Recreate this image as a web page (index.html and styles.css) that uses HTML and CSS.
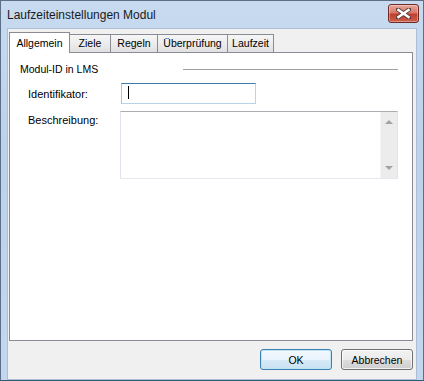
FILE: index.html
```html
<!DOCTYPE html>
<html lang="de">
<head>
  <meta charset="UTF-8">
  <title>Laufzeiteinstellungen Modul</title>
  <link rel="stylesheet" href="styles.css">
</head>
<body>

<div class="window">
  <div class="titlebar">
    <span class="title">Laufzeiteinstellungen Modul</span>
    <button class="close" title="Schließen">
      <svg width="15" height="11" viewBox="0 0 15 11">
        <path d="M2 1.5 L13 9.5 M13 1.5 L2 9.5" stroke="#5a3a36" stroke-width="4.2" stroke-linecap="square"/>
        <path d="M2.5 2 L12.5 9 M12.5 2 L2.5 9" stroke="#fff" stroke-width="2.6" stroke-linecap="square"/>
      </svg>
    </button>
  </div>

  <div class="client">
    <div class="tabs">
      <div class="tab active tab-allgemein">Allgemein</div>
      <div class="tab tab-ziele">Ziele</div>
      <div class="tab tab-regeln">Regeln</div>
      <div class="tab tab-pruefung">Überprüfung</div>
      <div class="tab tab-laufzeit">Laufzeit</div>
    </div>

    <div class="panel">
      <div class="group-header">
        <span>Modul-ID in LMS</span>
        <div class="group-line"></div>
      </div>

      <div class="row">
        <label class="field-label">Identifikator:</label>
        <div class="textbox"><span class="caret"></span></div>
      </div>

      <div class="row row-top">
        <label class="field-label">Beschreibung:</label>
        <div class="textarea">
          <div class="textarea-body"></div>
          <div class="scrollbar">
            <span class="arrow-up"></span>
            <span class="arrow-down"></span>
          </div>
        </div>
      </div>
    </div>

    <div class="actions">
      <button class="btn btn-default">OK</button>
      <button class="btn">Abbrechen</button>
    </div>
  </div>
</div>

</body>
</html>
```

FILE: styles.css
```css
body {
  margin: 0;
  font-family: 'Liberation Sans', Arial, sans-serif;
  color: #000;
}

.window {
  width: 424px;
  height: 381px;
  box-sizing: border-box;
  border: 1px solid #5d6f86;
  border-bottom-color: #2b5e73;
  background: linear-gradient(180deg, #c7daf0 0%, #bcd2eb 40%, #c3d7ee 100%);
}

.titlebar {
  height: 27px;
  display: flex;
  align-items: center;
  justify-content: space-between;
  padding-left: 6px;
}

.title {
  font-size: 12px;
  color: #1a1a1a;
}

.close {
  width: 31px;
  height: 19px;
  margin: -3px 4px 0 0;
  padding: 0;
  border: 1px solid #6d2a22;
  border-radius: 3px;
  background: linear-gradient(180deg, #e7a79c 0%, #d6796b 45%, #c0402e 55%, #cc5d4c 100%);
  display: flex;
  align-items: center;
  justify-content: center;
  box-shadow: inset 0 0 0 1px rgba(255, 255, 255, 0.35);
}

.client {
  margin: 0 6px 3px 6px;
  height: 347px;
  border: 1px solid #aebfd5;
  background: #f0f0f0;
  padding: 3px 3px 0 1px;
}

/* tabs */

.tabs {
  display: flex;
  align-items: flex-end;
  position: relative;
  z-index: 2;
}

.tab {
  box-sizing: border-box;
  height: 18px;
  margin-left: -1px;
  border: 1px solid #898c95;
  border-bottom: none;
  background: linear-gradient(180deg, #f6f6f6 0%, #ececec 50%, #e0e0e0 100%);
  font-size: 10.5px;
  line-height: 16px;
  text-align: center;
}

.tab.active {
  height: 21px;
  margin-bottom: -1px;
  background: #fff;
  line-height: 20px;
  z-index: 3;
}

.tab-allgemein { width: 61px; margin-left: 0; }
.tab-ziele { width: 42px; }
.tab-regeln { width: 48px; }
.tab-pruefung { width: 71px; }
.tab-laufzeit { width: 47px; }

.panel {
  box-sizing: border-box;
  width: 404px;
  height: 289px;
  border: 1px solid #898c95;
  background: #fff;
  padding: 10px 14px 0 10px;
}

.group-header {
  display: flex;
  align-items: center;
  height: 12px;
  font-size: 10.5px;
}

.group-line {
  margin-left: auto;
  width: 215px;
  border-top: 1px solid #a0a0a0;
}

.row {
  display: flex;
  align-items: center;
  margin: 8px 0 0 8px;
}

.row-top {
  align-items: flex-start;
  margin-top: 7px;
}

.field-label {
  width: 92px;
  font-size: 11px;
}

.row-top .field-label {
  padding-top: 3px;
}

.textbox {
  box-sizing: border-box;
  width: 135px;
  height: 21px;
  margin-left: 1px;
  border: 1px solid #b7d3ea;
  border-top-color: #3d7bad;
  border-left-color: #a4c6e3;
  background: #fff;
  padding: 2px 0 0 6px;
}

.caret {
  display: block;
  width: 1px;
  height: 13px;
  background: #000;
}

.textarea {
  box-sizing: border-box;
  display: flex;
  width: 279px;
  height: 68px;
  border: 1px solid #e2e3ea;
  border-top-color: #abadb3;
  border-bottom-color: #e3e9ef;
  background: #fff;
}

.textarea-body {
  flex: 1;
}

.scrollbar {
  width: 17px;
  background: #ececec;
  border-left: 1px solid #f4f4f4;
  display: flex;
  flex-direction: column;
  align-items: center;
  justify-content: space-between;
  padding: 8px 0 8px;
  box-sizing: border-box;
}

.arrow-up,
.arrow-down {
  width: 0;
  height: 0;
  border-left: 4px solid transparent;
  border-right: 4px solid transparent;
}

.arrow-up {
  border-bottom: 4px solid #a3a3a3;
}

.arrow-down {
  border-top: 4px solid #a3a3a3;
}

/* buttons */

.actions {
  display: flex;
  justify-content: flex-end;
  gap: 9px;
  margin-top: 8px;
}

.btn {
  width: 72px;
  height: 21px;
  padding: 0;
  border: 1px solid #707070;
  border-radius: 3px;
  background: linear-gradient(180deg, #f2f2f2 0%, #ebebeb 50%, #dddddd 51%, #cfcfcf 100%);
  box-shadow: inset 0 0 0 1px rgba(255, 255, 255, 0.7);
  font-family: 'Liberation Sans', Arial, sans-serif;
  font-size: 10.5px;
  color: #000;
}

.btn-default {
  border-color: #3c7fb1;
  background: linear-gradient(180deg, #f3f9fd 0%, #e8f3fb 50%, #d7eaf7 51%, #c9e2f3 100%);
  box-shadow: inset 0 0 0 1px #bfe4f6;
}
```
